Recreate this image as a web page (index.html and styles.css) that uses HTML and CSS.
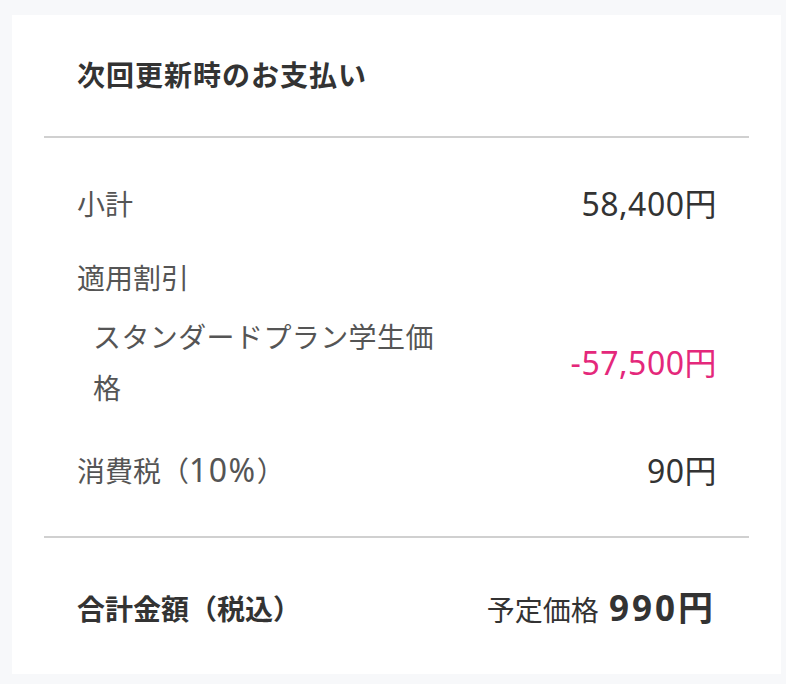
FILE: index.html
```html
<!DOCTYPE html>
<html lang="ja">
<head>
  <meta charset="UTF-8" />
  <meta name="viewport" content="width=device-width, initial-scale=1.0"/>
  <title>次回更新時のお支払い</title>
  <link rel="stylesheet" href="styles.css">
</head>
<body>

<!-- お支払いカード -->
<div class="card">
  <div class="card-header">
    <h2 class="title">次回更新時のお支払い</h2>
  </div>

  <div class="card-body">
    <div class="row">
      <span class="label">小計</span>
      <span class="amount">58,400円</span>
    </div>

    <div class="discounts">
      <div class="label">適用割引</div>
      <div class="row discount-item">
        <span class="label item-name">スタンダードプラン学生価格</span>
        <span class="amount minus">-57,500円</span>
      </div>
    </div>

    <div class="row tax-row">
      <span class="label">消費税（<span class="num">10%</span>）</span>
      <span class="amount">90円</span>
    </div>
  </div>

  <div class="card-footer">
    <div class="row total">
      <span class="total-label">合計金額（税込）</span>
      <span class="total-value">予定価格 <strong class="total-price">990円</strong></span>
    </div>
  </div>
</div>

</body>
</html>
```

FILE: styles.css
```css
body {
  margin: 0;
  background: #f7f8fa;
  font-family: "Noto Sans", "Noto Sans CJK JP", sans-serif;
  color: #333;
}
.card {
  background: #fff;
  margin: 15px 5px 0 12px;
  padding: 0 32px;
  height: 659px;
  box-sizing: border-box;
}
.card-header {
  padding: 35px 33px;
  border-bottom: 2px solid #d0d0d0;
}
.title {
  margin: 0;
  font-size: 28px;
  line-height: 51px;
  font-weight: bold;
  letter-spacing: 1px;
  color: #333;
}
.card-body {
  padding: 40px 33px;
  border-bottom: 2px solid #d0d0d0;
}
.row {
  display: flex;
  justify-content: space-between;
  align-items: center;
  line-height: 51px;
}
.label {
  font-family: "Noto Sans CJK JP", sans-serif;
  font-size: 28px;
  line-height: 51px;
  color: #555;
}
.label .num {
  font-family: "Noto Sans", sans-serif;
  font-size: 32px;
  letter-spacing: 1.5px;
}
.amount {
  font-size: 32px;
  letter-spacing: 0.5px;
  margin-right: -1px;
  color: #333;
  white-space: nowrap;
}
.minus {
  color: #e4287b;
}
.discounts {
  margin-top: 23px;
}
.discount-item {
  margin-top: 8px;
  padding-left: 16px;
}
.item-name {
  max-width: 350px;
  letter-spacing: 0.4px;
}
.tax-row {
  margin-top: 31px;
}
.card-footer {
  padding: 42px 33px 40px;
}
.total {
  line-height: 55px;
}
.total-label {
  font-family: "Noto Sans CJK JP", sans-serif;
  font-size: 28px;
  font-weight: bold;
  color: #333;
}
.total-value {
  font-family: "Noto Sans CJK JP", sans-serif;
  font-size: 28px;
  color: #333;
}
.total-price {
  font-family: "Noto Sans", "Noto Sans CJK JP", sans-serif;
  font-size: 35px;
  letter-spacing: 3px;
  margin-left: 4px;
}
```
